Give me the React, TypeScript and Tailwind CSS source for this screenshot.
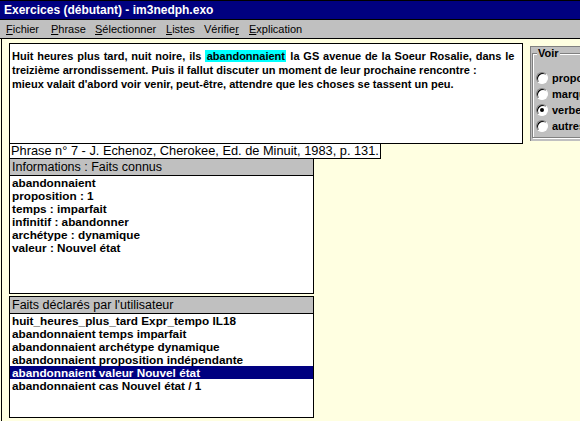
import React from "react";

const infos = [
  "abandonnaient",
  "proposition : 1",
  "temps : imparfait",
  "infinitif : abandonner",
  "archétype : dynamique",
  "valeur : Nouvel état",
];

const faits = [
  "huit_heures_plus_tard Expr_tempo IL18",
  "abandonnaient temps imparfait",
  "abandonnaient archétype dynamique",
  "abandonnaient proposition indépendante",
  "abandonnaient valeur Nouvel état",
  "abandonnaient cas Nouvel état / 1",
];

const choix = [
  { label: "propositions", checked: false },
  { label: "marqueurs", checked: false },
  { label: "verbes", checked: true },
  { label: "autres", checked: false },
];

function Radio({ checked }: { checked: boolean }) {
  return (
    <span className="w-[12px] h-[12px] rounded-full bg-white border border-t-[#808080] border-l-[#808080] border-b-white border-r-white shadow-[inset_1px_1px_0_#000] flex items-center justify-center shrink-0">
      {checked && <span className="w-[4px] h-[4px] rounded-full bg-black" />}
    </span>
  );
}

export default function App() {
  return (
    <div className="w-[580px] h-[421px] overflow-hidden bg-[#ffffe1] text-black flex flex-col font-['Liberation_Sans',Arial,sans-serif]">
      {/* title bar */}
      <div className="h-[20px] shrink-0 border-t border-b border-black bg-[#000080] text-white font-bold text-[12px] leading-[18px] pl-[4px] whitespace-nowrap">
        Exercices (débutant) - im3nedph.exo
      </div>

      {/* menu */}
      <div className="h-[19px] shrink-0 border-b border-black bg-[#c0c0c0] flex text-[11px] leading-[18px] pl-[6px] whitespace-nowrap">
        <span className="w-[45px]"><span className="underline">F</span>ichier</span>
        <span className="w-[44px]"><span className="underline">P</span>hrase</span>
        <span className="w-[71px]"><span className="underline">S</span>électionner</span>
        <span className="w-[38px]"><span className="underline">L</span>istes</span>
        <span className="w-[45px]">Vérifie<span className="underline">r</span></span>
        <span><span className="underline">E</span>xplication</span>
      </div>

      {/* content */}
      <div className="flex-1 flex items-start ml-px border-l border-black pt-[4px]">
        <div className="w-[514px] ml-[7px] flex flex-col items-start shrink-0">
          <div className="w-[514px] h-[101px] border border-black bg-white pl-[2px] pt-[5px] text-[11px] font-bold leading-[14px] whitespace-nowrap">
            <div className="[word-spacing:0.8px]">
              Huit heures plus tard, nuit noire, ils{" "}
              <span className="bg-[#00ffff] px-[1.5px]">abandonnaient</span> la GS avenue de la Soeur Rosalie, dans le
            </div>
            <div>treizième arrondissement. Puis il fallut discuter un moment de leur prochaine rencontre :</div>
            <div>mieux valait d'abord voir venir, peut-être, attendre que les choses se tassent un peu.</div>
          </div>

          <div className="-mt-px h-[16px] border border-black bg-white px-[1px] text-[12.8px] leading-[14px] whitespace-nowrap">
            Phrase n° 7 - J. Echenoz, Cherokee, Ed. de Minuit, 1983, p. 131.
          </div>

          <div className="-mt-px w-[305px] h-[136px] border border-black bg-white flex flex-col">
            <div className="h-[17px] shrink-0 bg-[#c0c0c0] border-b border-black px-[2px] text-[12.5px] leading-[16px] whitespace-nowrap">
              Informations : Faits connus
            </div>
            <div className="pl-[2px] text-[11.75px] font-bold leading-[13px]">
              {infos.map((l) => (
                <div key={l} className="whitespace-nowrap">{l}</div>
              ))}
            </div>
          </div>

          <div className="mt-[2px] w-[305px] h-[122px] border border-black bg-white flex flex-col">
            <div className="h-[17px] shrink-0 bg-[#c0c0c0] border-b border-black px-[2px] text-[12.5px] leading-[16px] whitespace-nowrap">
              Faits déclarés par l'utilisateur
            </div>
            <div className="text-[11.75px] font-bold leading-[13px]">
              {faits.map((l, i) => (
                <div
                  key={l}
                  className={
                    i === 4
                      ? "pl-[2px] whitespace-nowrap bg-[#000080] text-white"
                      : "pl-[2px] whitespace-nowrap"
                  }
                >
                  {l}
                </div>
              ))}
            </div>
          </div>
        </div>

        {/* group box */}
        <div className="ml-[7px] mt-[3px] w-[80px] h-[95px] shrink-0 bg-[#c0c0c0] border-l border-t border-[#808080] relative">
          <div className="absolute left-[1px] top-[6px] right-0 bottom-[3px] border border-[#808080] shadow-[inset_1px_1px_0_#fff,1px_1px_0_#fff]" />
          <span className="absolute left-[6px] top-0 bg-[#c0c0c0] px-[1px] text-[11px] font-bold leading-[13px]">Voir</span>
          <div className="relative flex flex-col pt-[23px] pl-[5px] text-[11px] font-bold">
            {choix.map((c) => (
              <div key={c.label} className="h-[16px] flex items-center gap-[4px] whitespace-nowrap">
                <Radio checked={c.checked} />
                <span>{c.label}</span>
              </div>
            ))}
          </div>
        </div>
      </div>
    </div>
  );
}
